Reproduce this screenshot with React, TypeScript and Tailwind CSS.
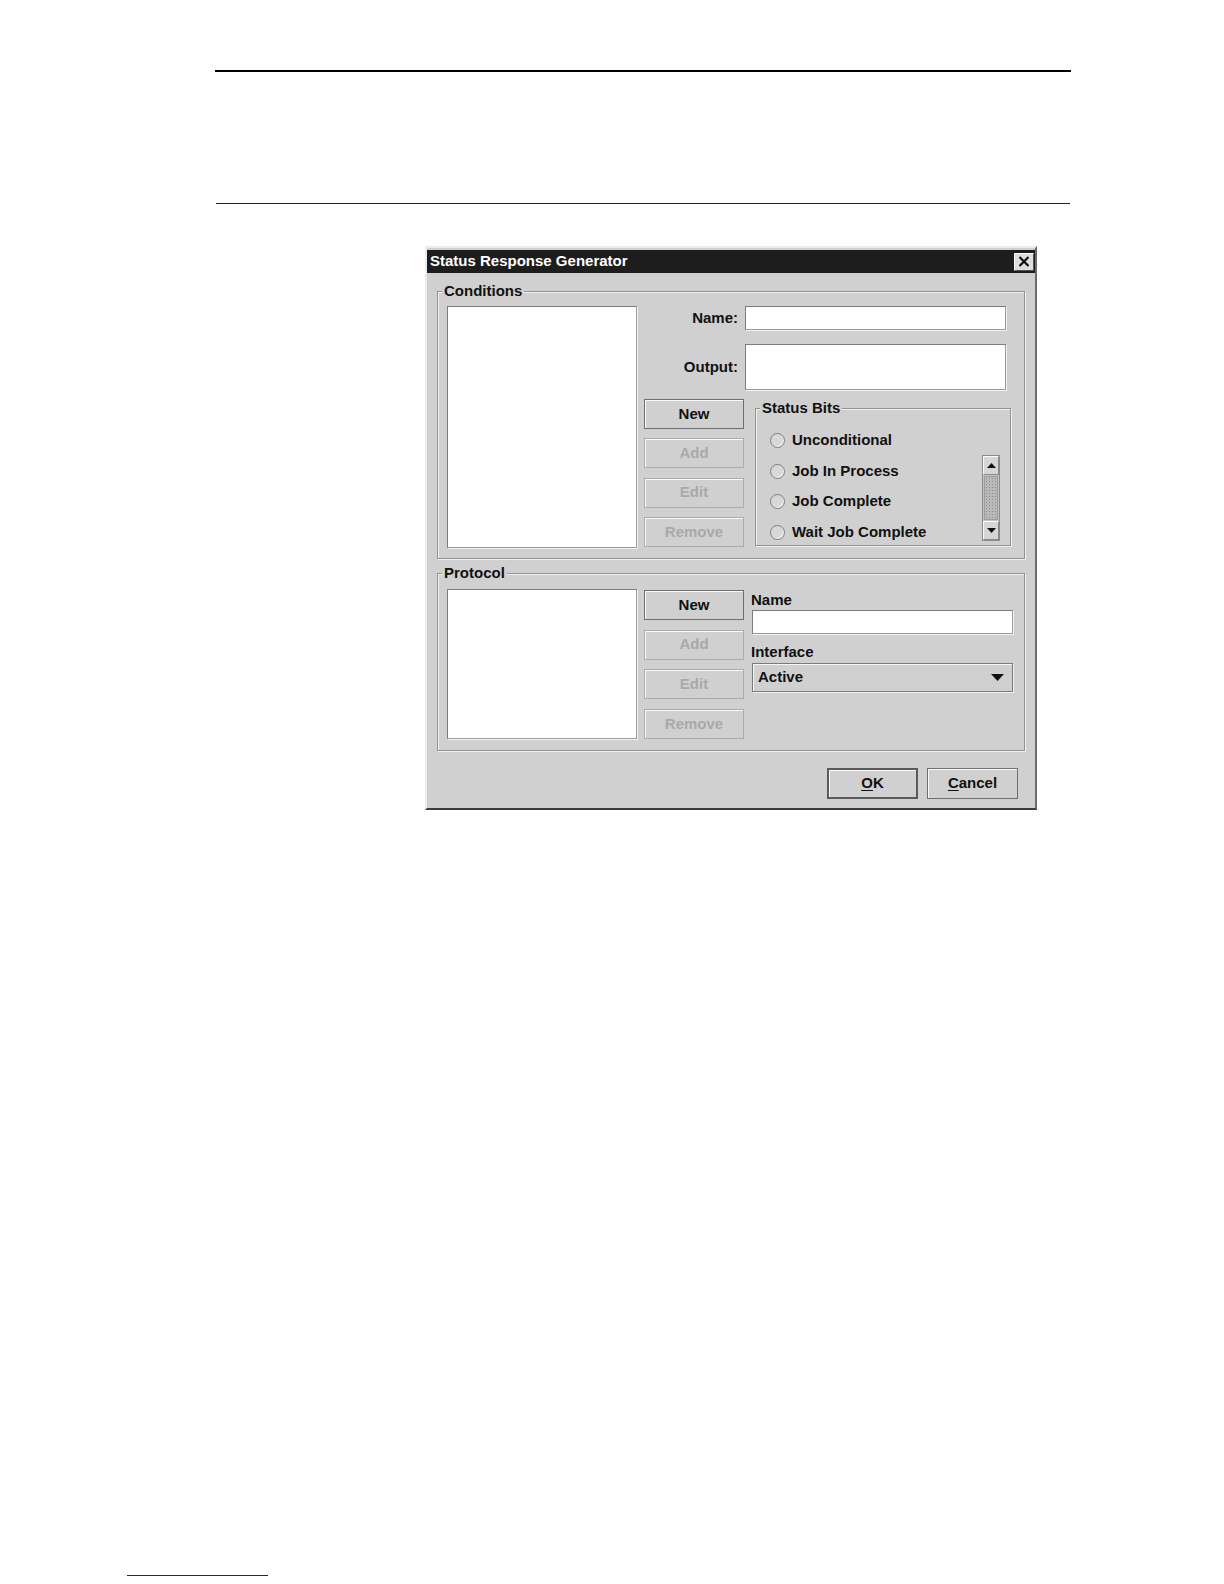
import React from "react";

const font = "font-['Liberation_Sans',Arial,sans-serif]";

function Btn({ label, disabled }: { label: string; disabled?: boolean }) {
  return (
    <div
      className={
        "h-[30px] w-[100px] flex items-center justify-center border text-[15px] font-bold shadow-[inset_1px_1px_0_#fafafa] " +
        (disabled
          ? "border-[#ababab] text-[#a9a9a9]"
          : "border-[#6f6f6f] text-[#111]")
      }
    >
      {label}
    </div>
  );
}

function Field({ className }: { className: string }) {
  return (
    <div
      className={
        "bg-white border border-t-[#7c7c7c] border-l-[#7c7c7c] border-b-[#9a9a9a] border-r-[#9a9a9a] shadow-[1px_1px_0_#f3f3f3] " +
        className
      }
    />
  );
}

function Radio({ label }: { label: string }) {
  return (
    <div className="h-[30.7px] flex items-center gap-[7px] shrink-0">
      <span className="w-[15px] h-[15px] rounded-full border border-[#7d7d7d] bg-[#d8d8d8] shadow-[inset_-1px_-1px_0_#f4f4f4]" />
      <span className="text-[15px] font-bold text-[#111]">{label}</span>
    </div>
  );
}

function GroupLabel({ text }: { text: string }) {
  return (
    <span className="absolute -top-[10px] left-[4px] bg-[#d0d0d0] px-[2px] leading-[17px] text-[15px] font-bold text-[#111]">
      {text}
    </span>
  );
}

const groupBox =
  "relative border border-[#929292] shadow-[inset_1px_1px_0_#f0f0f0,1px_1px_0_#f0f0f0]";

export default function App() {
  return (
    <div className={"bg-white flex flex-col items-start " + font}>
      {/* page rules */}
      <div className="mt-[70px] ml-[215px] w-[856px] h-[2px] bg-black" />
      <div className="mt-[131px] ml-[216px] w-[854px] h-[1px] bg-[#222]" />

      {/* dialog */}
      <div className="mt-[42px] ml-[425px] w-[612px] bg-[#d0d0d0] border-2 border-t-[#ececec] border-l-[#ececec] border-b-[#3c3c3c] border-r-[#6a6a6a] pt-[2px] flex flex-col">
        <div className="h-[23px] bg-[#1d1d1d] flex items-center justify-between pl-[3px] pr-[1px]">
          <span className="text-white text-[15px] font-bold">Status Response Generator</span>
          <div className="w-[20px] h-[18px] bg-[#dedede] border border-t-[#fafafa] border-l-[#fafafa] border-b-[#555] border-r-[#555] flex items-center justify-center">
            <svg width="12" height="11" viewBox="0 0 12 11">
              <path d="M1.5 1 L10.5 10 M10.5 1 L1.5 10" stroke="#111" strokeWidth="2.2" />
            </svg>
          </div>
        </div>

        {/* Conditions */}
        <div className={groupBox + " mx-[10px] mt-[18px] h-[268px] flex pl-[9px] pt-[14px]"}>
          <GroupLabel text="Conditions" />
          <Field className="w-[190px] h-[242px]" />
          <div className="ml-[7px] flex flex-col">
            <div className="flex items-center h-[24px]">
              <span className="w-[101px] text-right pr-[7px] text-[15px] font-bold text-[#111]">Name:</span>
              <Field className="w-[261px] h-[24px]" />
            </div>
            <div className="flex items-center h-[46px] mt-[14px]">
              <span className="w-[101px] text-right pr-[7px] text-[15px] font-bold text-[#111]">Output:</span>
              <Field className="w-[261px] h-[46px]" />
            </div>
            <div className="flex mt-[9px]">
              <div className="flex flex-col gap-[9.3px]">
                <Btn label="New" />
                <Btn label="Add" disabled />
                <Btn label="Edit" disabled />
                <Btn label="Remove" disabled />
              </div>
              <div className={groupBox + " ml-[11px] mt-[9px] w-[256px] h-[138px] flex"}>
                <GroupLabel text="Status Bits" />
                <div className="flex-1 flex flex-col pl-[14px] pt-[16px] overflow-hidden h-[135px]">
                  <Radio label="Unconditional" />
                  <Radio label="Job In Process" />
                  <Radio label="Job Complete" />
                  <Radio label="Wait Job Complete" />
                </div>
                <div className="mt-[46px] mr-[10px] w-[18px] h-[86px] flex flex-col border border-[#8a8a8a] bg-[#c4c4c4]">
                  <div className="h-[19px] flex items-center justify-center bg-[#d6d6d6] border border-t-[#fafafa] border-l-[#fafafa] border-b-[#8a8a8a] border-r-[#8a8a8a]">
                    <svg width="9" height="5" viewBox="0 0 9 5"><path d="M4.5 0 L9 5 L0 5 Z" fill="#111" /></svg>
                  </div>
                  <div className="flex-1 m-[1px] bg-[#b9b9b9] bg-[radial-gradient(circle,#8c8c8c_0.8px,transparent_1px)] bg-[length:3px_3px] border border-[#9c9c9c]" />
                  <div className="h-[19px] flex items-center justify-center bg-[#d6d6d6] border border-t-[#fafafa] border-l-[#fafafa] border-b-[#8a8a8a] border-r-[#8a8a8a]">
                    <svg width="9" height="5" viewBox="0 0 9 5"><path d="M0 0 L9 0 L4.5 5 Z" fill="#111" /></svg>
                  </div>
                </div>
              </div>
            </div>
          </div>
        </div>

        {/* Protocol */}
        <div className={groupBox + " mx-[10px] mt-[14px] h-[178px] flex pl-[9px] pt-[15px]"}>
          <GroupLabel text="Protocol" />
          <Field className="w-[190px] h-[150px]" />
          <div className="ml-[7px] mt-[1px] flex flex-col gap-[9.7px]">
            <Btn label="New" />
            <Btn label="Add" disabled />
            <Btn label="Edit" disabled />
            <Btn label="Remove" disabled />
          </div>
          <div className="ml-[7px] mt-[1px] flex flex-col w-[262px]">
            <span className="h-[20px] leading-[20px] text-[15px] font-bold text-[#111]">Name</span>
            <Field className="ml-[1px] w-[261px] h-[24px]" />
            <span className="mt-[8px] h-[20px] leading-[20px] text-[15px] font-bold text-[#111]">Interface</span>
            <div className="mt-[1px] ml-[1px] w-[261px] h-[29px] flex items-center justify-between pl-[5px] pr-[8px] border border-[#7a7a7a] shadow-[inset_1px_1px_0_#f6f6f6,1px_1px_0_#f0f0f0]">
              <span className="text-[15px] font-bold text-[#111]">Active</span>
              <svg width="13" height="7" viewBox="0 0 13 7"><path d="M0 0 L13 0 L6.5 7 Z" fill="#111" /></svg>
            </div>
          </div>
        </div>

        {/* footer */}
        <div className="mt-[17px] mb-[9px] flex justify-end gap-[9px] pr-[17px]">
          <div className="w-[91px] h-[31px] flex items-center justify-center border-2 border-[#5a5a5a] shadow-[inset_1px_1px_0_#fafafa] text-[15px] font-bold text-[#111]">
            <span className="underline underline-offset-2">O</span>K
          </div>
          <div className="w-[91px] h-[31px] flex items-center justify-center border border-[#6f6f6f] shadow-[inset_1px_1px_0_#fafafa] text-[15px] font-bold text-[#111]">
            <span className="underline underline-offset-2">C</span>ancel
          </div>
        </div>
      </div>

      {/* footnote rule */}
      <div className="mt-[765px] ml-[127px] w-[141px] h-[1px] bg-[#1c1c8a]" />
    </div>
  );
}
